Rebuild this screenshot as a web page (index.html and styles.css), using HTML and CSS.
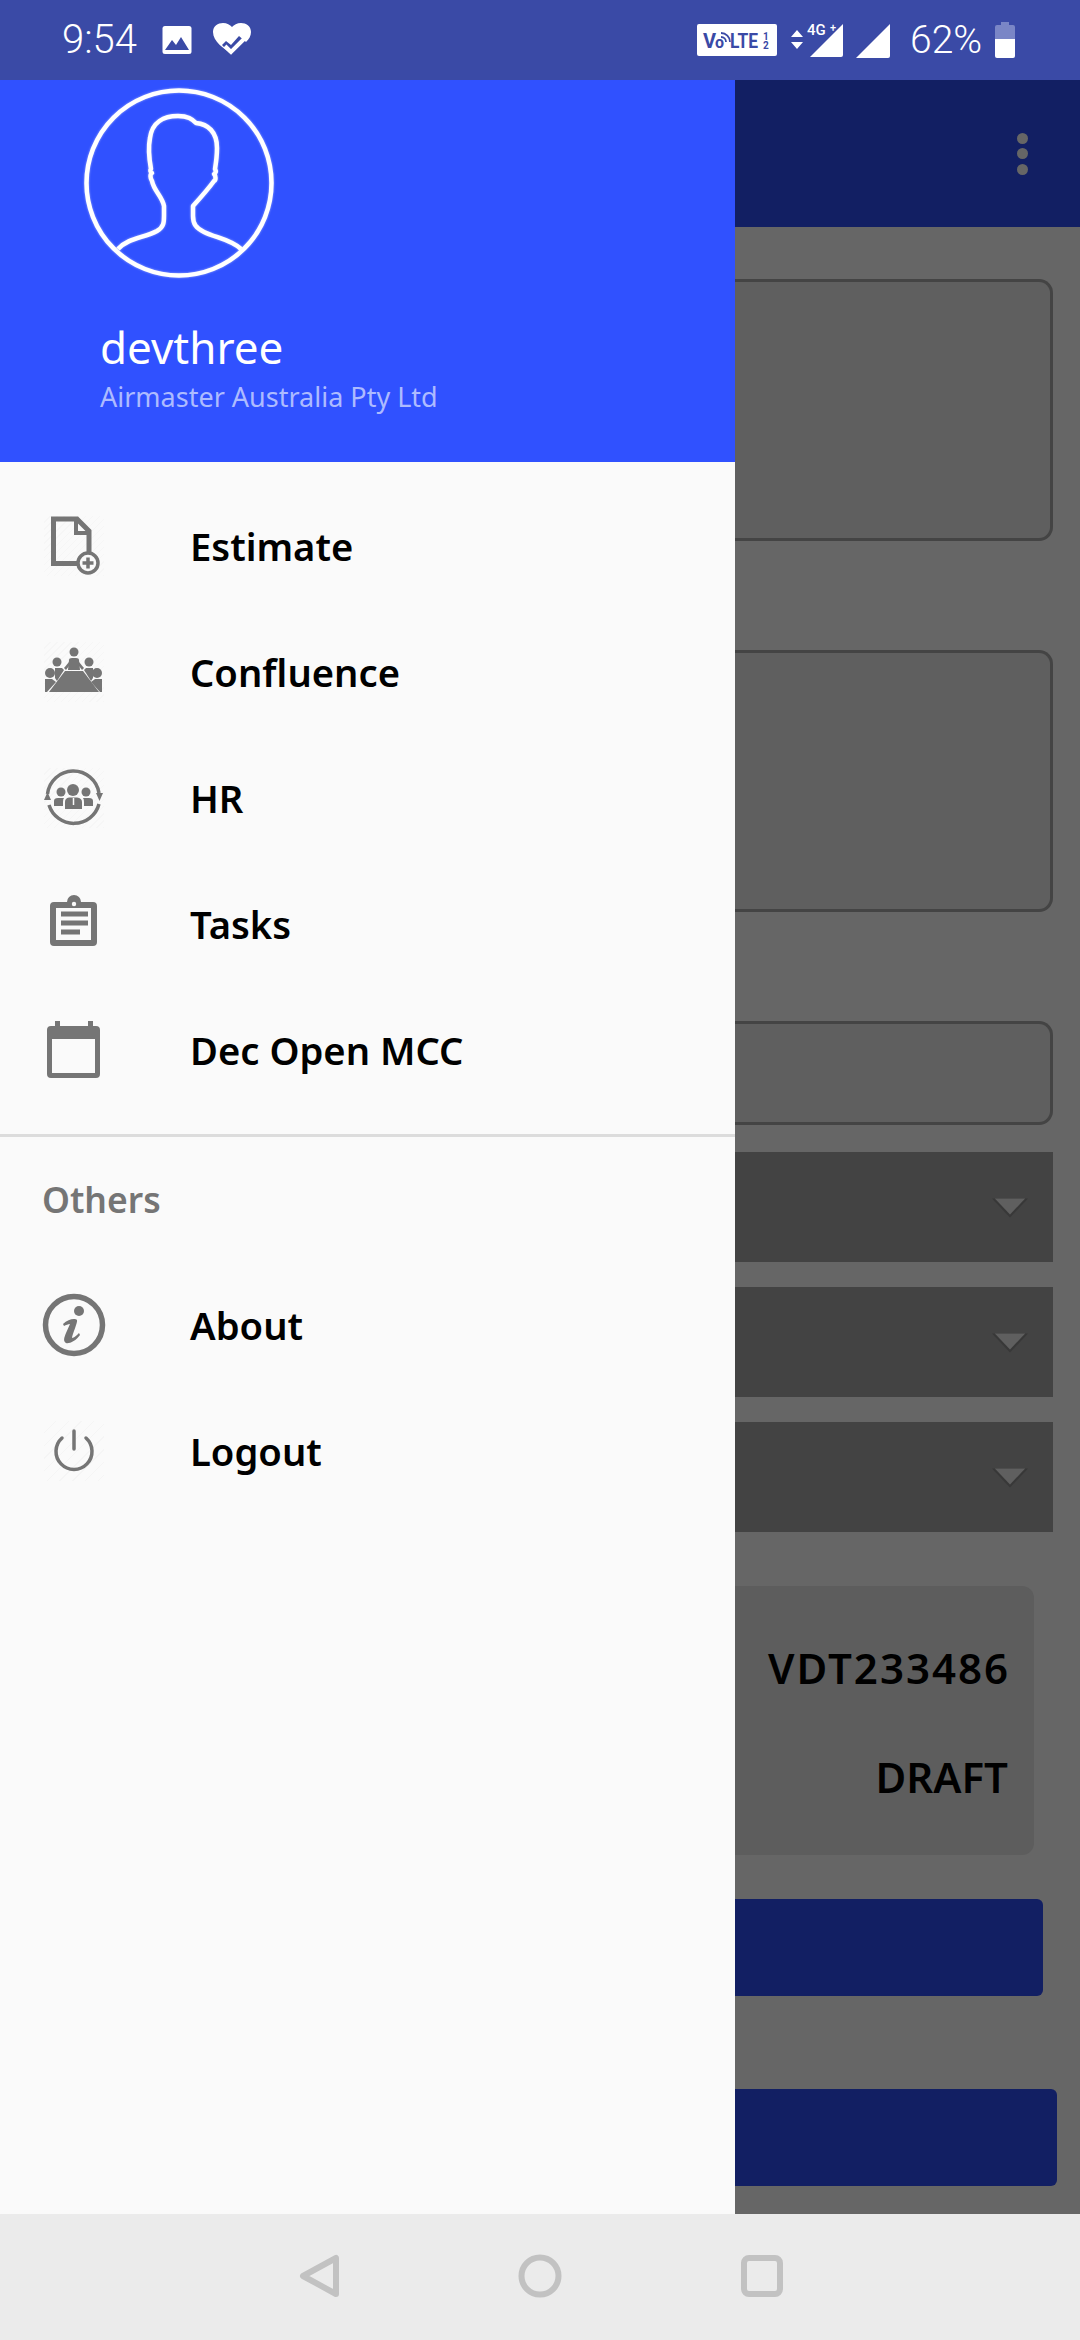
FILE: index.html
```html
<!DOCTYPE html>
<html lang="en">
<head>
<meta charset="utf-8">
<title>Drawer</title>
<link rel="stylesheet" href="styles.css">
</head>
<body>
<div class="screen">
  <header class="status">
    <span class="time">9:54</span>
    <svg class="st-img" viewBox="0 0 30 30"><rect x="0.5" y="1" width="29" height="28" rx="2.5" fill="#fff"/><path d="M3 25 L10 15 L14 20 L19 12 L27 25Z" fill="#3a4aa6"/></svg>
    <svg class="st-heart" viewBox="0 0 40 36"><path d="M20 33 C12 26 1 20 1 10 C1 4 6 1 11 1 C15 1 18 3 20 5 C22 3 25 1 29 1 C34 1 39 4 39 10 C39 14 37 17 34 20 L27 14 L19 23 L14 19 L10 23Z" fill="#fff"/><path d="M13 24 L19 30 L32 17" fill="none" stroke="#fff" stroke-width="4"/></svg>
    <span class="spacer"></span>
    <svg class="st-volte" viewBox="0 0 80 32"><rect width="80" height="32" rx="2" fill="#fff"/><text x="6" y="24" class="vt">V</text><text x="18" y="24" class="vt vo">o</text><path d="M24 13 a5 5 0 0 1 5 5 M24 9 a9 9 0 0 1 9 9" fill="none" stroke="#3a4aa6" stroke-width="1.800"/><text x="33" y="24" class="vt" textLength="28" lengthAdjust="spacingAndGlyphs">LTE</text><text x="66" y="16" class="vs">1</text><text x="66" y="25" class="vs">2</text></svg>
    <svg class="st-arrows" viewBox="0 0 12 20"><path d="M6 0 L12 7 H0Z M0 12 H12 L6 19Z" fill="#fff"/></svg>
    <svg class="st-sig1" viewBox="0 0 34 36"><path d="M0 35 L33 2 V33 Q33 35 31 35Z" fill="#fff"/><text x="-3" y="13" class="fg">4G</text><text x="20" y="9" class="fp">+</text></svg>
    <svg class="st-sig2" viewBox="0 0 34 35"><path d="M0 35 L34 1 V33 Q34 35 32 35Z" fill="#fff"/></svg>
    <span class="pct">62%</span>
    <svg class="st-bat" viewBox="0 0 20 36"><path d="M6 0 H14 V3 H18 Q20 3 20 5 V17 H0 V5 Q0 3 2 3 H6Z" fill="#7a86c6"/><path d="M0 17 H20 V34 Q20 36 18 36 H2 Q0 36 0 34Z" fill="#fff"/></svg>
  </header>

  <div class="middle">
    <aside class="drawer">
      <div class="profile">
        <svg class="avatar" viewBox="0 0 190 190">
          <circle cx="95" cy="95" r="92.5" fill="none" stroke="#fff" stroke-width="4.5"/>
          <path d="M34 161 C44 150 60 150 73 143 C80 139 80 134 80 128 L80 118 C78 108 70 103 68 93 C66 90 66 86 68 85 C66 84 66 82 67 81 C65 70 64 60 66 50 C68 34 80 28 94 28 C104 28 108 31 112 35 C124 36 133 44 133 60 C133 68 132 75 131 81 C132 83 133 84 130 86 C132 88 132 92 130 93 C125 100 118 108 109 118 L109 128 C109 136 112 140 120 144 C132 150 146 151 157 161" fill="none" stroke="#fff" stroke-width="4.5" stroke-linejoin="round"/>
        </svg>
        <div class="name">devthree</div>
        <div class="org">Airmaster Australia Pty Ltd</div>
      </div>
      <nav class="list list-top">
        <div class="item">
          <svg class="ic hatch" viewBox="0 0 60 60"><path d="M9.500 3 H33 L45 15 V47.500 H9.500Z" fill="none" stroke="#757575" stroke-width="5"/><path d="M32 3 V17 H45" fill="none" stroke="#757575" stroke-width="4"/><circle cx="44" cy="47" r="10" fill="#fafafa" stroke="#757575" stroke-width="3.500"/><path d="M44 41.500 V52.500 M38.500 47 H49.500" stroke="#757575" stroke-width="3.500"/></svg>
          <span class="label">Estimate</span>
        </div>
        <div class="item">
          <svg class="ic hatch" viewBox="0 0 60 60"><g fill="#757575"><circle cx="30" cy="10" r="4.500"/><path d="M24 28 L25 18 Q25 16 28 16 H32 Q35 16 35 18 L36 28Z"/><path d="M20 26 L25 20 V24 L22 28Z"/><path d="M40 26 L35 20 V24 L38 28Z"/><circle cx="13" cy="20" r="4.500"/><circle cx="45" cy="20" r="4.500"/><circle cx="6" cy="31" r="5"/><circle cx="53" cy="31" r="5"/><path d="M11 26 H18 L20 28 L13 39 L11 36Z"/><path d="M49 26 H42 L40 28 L47 39 L49 36Z"/><path d="M1 37 H8 L12 40 L3 50 H1Z"/><path d="M58 37 H51 L47 40 L56 50 H58Z"/><path d="M21 29 H39 L55 50 H5Z"/></g></svg>
          <span class="label">Confluence</span>
        </div>
        <div class="item">
          <svg class="ic hatch" viewBox="0 0 60 60"><g fill="none" stroke="#757575" stroke-width="3.500"><path d="M3.500 26 A26 26 0 0 1 55 25"/><path d="M55 36 A26 26 0 0 1 5 37"/></g><g fill="#757575"><path d="M0 32 L3.500 24 L7 32Z"/><path d="M52 25 H59 L55.500 33Z"/><circle cx="29" cy="22" r="6"/><circle cx="17" cy="24" r="4.500"/><circle cx="42" cy="24" r="4.500"/><path d="M21 41 V34 Q21 30 25 29.500 H33 Q38 30 38 34 V41Z"/><path d="M10 38 V33 Q10 30 14 30 H20 Q19 31 19 34 V38Z"/><path d="M49 38 V33 Q49 30 45 30 H39 Q40 31 40 34 V38Z"/></g><path d="M29.500 30 V37" stroke="#fafafa" stroke-width="1.500"/></svg>
          <span class="label">HR</span>
        </div>
        <div class="item">
          <svg class="ic" viewBox="0 0 60 60"><path d="M10 8 H23 A7 7 0 0 1 37 8 H49 Q53 8 53 12 V48 Q53 52 49 52 H10 Q6 52 6 48 V12 Q6 8 10 8Z" fill="#757575"/><circle cx="30" cy="10" r="2.200" fill="#fafafa"/><rect x="12" y="14" width="35" height="32" fill="#fafafa"/><path d="M17 20 H44 M17 29 H44 M17 38 H36" stroke="#757575" stroke-width="5"/></svg>
          <span class="label">Tasks</span>
        </div>
        <div class="item">
          <svg class="ic" viewBox="0 0 60 60"><path d="M11 1 H16 V6 H44 V1 H49 V6 H52 Q56 6 56 10 V54 Q56 58 52 58 H7 Q3 58 3 54 V10 Q3 6 7 6 H11Z" fill="#757575"/><rect x="8" y="19" width="43" height="34" fill="#fafafa"/></svg>
          <span class="label">Dec Open MCC</span>
        </div>
      </nav>
      <div class="divider"></div>
      <div class="section">Others</div>
      <nav class="list">
        <div class="item">
          <svg class="ic" viewBox="3 3 60 60"><circle cx="33" cy="33" r="28.500" fill="none" stroke="#757575" stroke-width="5.500"/><circle cx="38" cy="19" r="5" fill="#757575"/><path d="M22 32 C27 27 34 26 36 28 C37 30 31 43 31 46 C33 46 36 43 38 41 L39 43 C35 49 28 52 25 51 C22 49 23 46 25 41 L29 32 C27 32 25 33 23 34Z" fill="#757575"/></svg>
          <span class="label">About</span>
        </div>
        <div class="item">
          <svg class="ic hatch-cross" viewBox="0 0 60 60"><path d="M18 17 A18 18 0 1 0 42 17" fill="none" stroke="#757575" stroke-width="3.500" stroke-linecap="round"/><path d="M30 10 V28" stroke="#757575" stroke-width="3.500" stroke-linecap="round"/></svg>
          <span class="label">Logout</span>
        </div>
      </nav>
    </aside>

    <main class="under">
      <div class="appbar">
        <span class="dots"><i></i><i></i><i></i></span>
      </div>
      <div class="box box-tall box-first"></div>
      <div class="box box-tall box-next"></div>
      <div class="box box-short box-next"></div>
      <div class="select select-first"><svg class="caret" viewBox="0 0 40 24"><path d="M1 3 H39 L20 23Z" fill="#383838"/><path d="M4 3 H36 L20 20Z" fill="#5f5f5f"/></svg></div>
      <div class="select"><svg class="caret" viewBox="0 0 40 24"><path d="M1 3 H39 L20 23Z" fill="#383838"/><path d="M4 3 H36 L20 20Z" fill="#5f5f5f"/></svg></div>
      <div class="select"><svg class="caret" viewBox="0 0 40 24"><path d="M1 3 H39 L20 23Z" fill="#383838"/><path d="M4 3 H36 L20 20Z" fill="#5f5f5f"/></svg></div>
      <div class="card">
        <div class="card-line card-code">VDT233486</div>
        <div class="card-line">DRAFT</div>
      </div>
      <div class="btn btn-a"></div>
      <div class="btn btn-b"></div>
    </main>
  </div>

  <footer class="navbar">
    <svg class="nav-ic" viewBox="0 0 44 44"><path d="M40 4 V40 L7 22Z" fill="none" stroke="#c2c2c2" stroke-width="6" stroke-linejoin="round"/></svg>
    <svg class="nav-ic" viewBox="0 0 44 44"><circle cx="22" cy="22" r="18.500" fill="none" stroke="#c2c2c2" stroke-width="6"/></svg>
    <svg class="nav-ic" viewBox="0 0 44 44"><rect x="4" y="4" width="36" height="36" rx="5" fill="none" stroke="#c2c2c2" stroke-width="6"/></svg>
  </footer>
</div>
</body>
</html>
```

FILE: styles.css
```css
* { box-sizing: border-box; }
html, body { margin: 0; padding: 0; }
body { font-family: "Noto Sans", "Open Sans", sans-serif; background: #666; }

.screen { width: 1080px; height: 2340px; display: flex; flex-direction: column; overflow: hidden; }

/* status bar */
.status { height: 80px; flex: none; background: #3a4aa6; display: flex; align-items: center; padding-left: 62px; padding-right: 65px; color: #fff; }
.time { font-family: "Roboto", sans-serif; font-weight: 300; font-size: 40px; line-height: 80px; width: 100px; }
.spacer { flex: 1; }
.st-img { width: 30px; height: 30px; }
.st-heart { width: 40px; height: 36px; margin-left: 20px; }
.st-volte { width: 80px; height: 32px; }
.vt { font-family: "Roboto", sans-serif; font-weight: 700; font-size: 20px; fill: #3a4aa6; }
.vo { font-size: 16px; }
.vs { font-family: "Roboto", sans-serif; font-weight: 700; font-size: 10px; fill: #3a4aa6; }
.st-arrows { width: 12px; height: 20px; margin-left: 14px; }
.st-sig1 { width: 34px; height: 36px; margin-left: 7px; overflow: visible; }
.fg { font-family: "Roboto", sans-serif; font-weight: 500; font-size: 15px; fill: #fff; }
.fp { font-family: "Roboto", sans-serif; font-weight: 500; font-size: 11px; fill: #fff; }
.st-sig2 { width: 34px; height: 35px; margin-left: 12px; }
.pct { font-family: "Roboto", sans-serif; font-weight: 300; font-size: 39px; margin-left: 20px; width: 85px; }
.st-bat { width: 20px; height: 36px; }

/* body */
.middle { flex: 1; display: flex; min-height: 0; }

.drawer { width: 735px; flex: none; background: #fafafa; }
.profile { height: 382px; background: #3051ff; padding-top: 8px; color: #fff; }
.avatar { display: block; width: 190px; height: 190px; margin-left: 84px; filter: blur(0.6px) drop-shadow(0 0 1px rgba(255,255,255,.5)); }
.name { font-size: 44px; line-height: 60px; margin: 39px 0 0 100px; font-weight: 400; }
.org { font-size: 27px; line-height: 38px; margin: 1px 0 0 100px; color: #adbbff; }

.list-top { padding-top: 21px; }
.item { height: 126px; display: flex; align-items: center; padding-left: 44px; gap: 86px; }
.ic { width: 60px; height: 60px; flex: none; overflow: visible; }
.hatch { background: repeating-linear-gradient(135deg, #fafafa 0 4px, #f6f6f6 4px 5px); }
.hatch-cross { background: repeating-linear-gradient(135deg, #fafafa 0 8px, #f5f5f5 8px 9px), #fafafa; }
.label { font-size: 38.200px; font-weight: 600; color: #000; line-height: 50px; }
.divider { height: 3px; background: #dcdcdc; margin-top: 21px; }
.section { height: 125px; padding: 40px 0 0 42px; font-size: 35.500px; line-height: 44px; font-weight: 600; color: #757575; }

.under { flex: 1; display: flex; flex-direction: column; background: #666; min-width: 0; }
.appbar { height: 147px; flex: none; background: #121f63; display: flex; justify-content: flex-end; align-items: center; padding-right: 52px; }
.dots { display: flex; flex-direction: column; gap: 4.500px; }
.dots i { display: block; width: 11px; height: 11px; border-radius: 50%; background: #666; }

.box { margin-right: 27px; background: #5f5f5f; border: 3px solid #444; border-left: none; border-radius: 0 14px 14px 0; flex: none; }
.box-tall { height: 262px; }
.box-short { height: 104px; }
.box-first { margin-top: 52px; }
.box-next { margin-top: 109px; }

.select { height: 110px; flex: none; margin-right: 27px; margin-top: 25px; background: #434343; display: flex; justify-content: flex-end; align-items: center; padding-right: 24px; }
.select-first { margin-top: 27px; }
.caret { width: 38px; height: 24px; margin-top: 0; }

.card { height: 269px; flex: none; margin-top: 54px; margin-right: 46px; background: #5d5d5d; border-radius: 0 12px 12px 0; padding: 54px 26px 0 0; text-align: right; display: flex; flex-direction: column; gap: 54px; }
.card-line { font-size: 42px; line-height: 55px; font-weight: 600; color: #000; }
.card-code { letter-spacing: 2px; margin-right: -2px; }

.btn { height: 97px; flex: none; background: #121f63; border-radius: 0 6px 6px 0; }
.btn-a { margin-top: 44px; margin-right: 37px; }
.btn-b { margin-top: 93px; margin-right: 23px; }

.navbar { height: 126px; flex: none; background: #ebebeb; display: flex; justify-content: center; align-items: center; gap: 178px; }
.nav-ic { width: 44px; height: 44px; margin-bottom: 2px; overflow: visible; }
```
